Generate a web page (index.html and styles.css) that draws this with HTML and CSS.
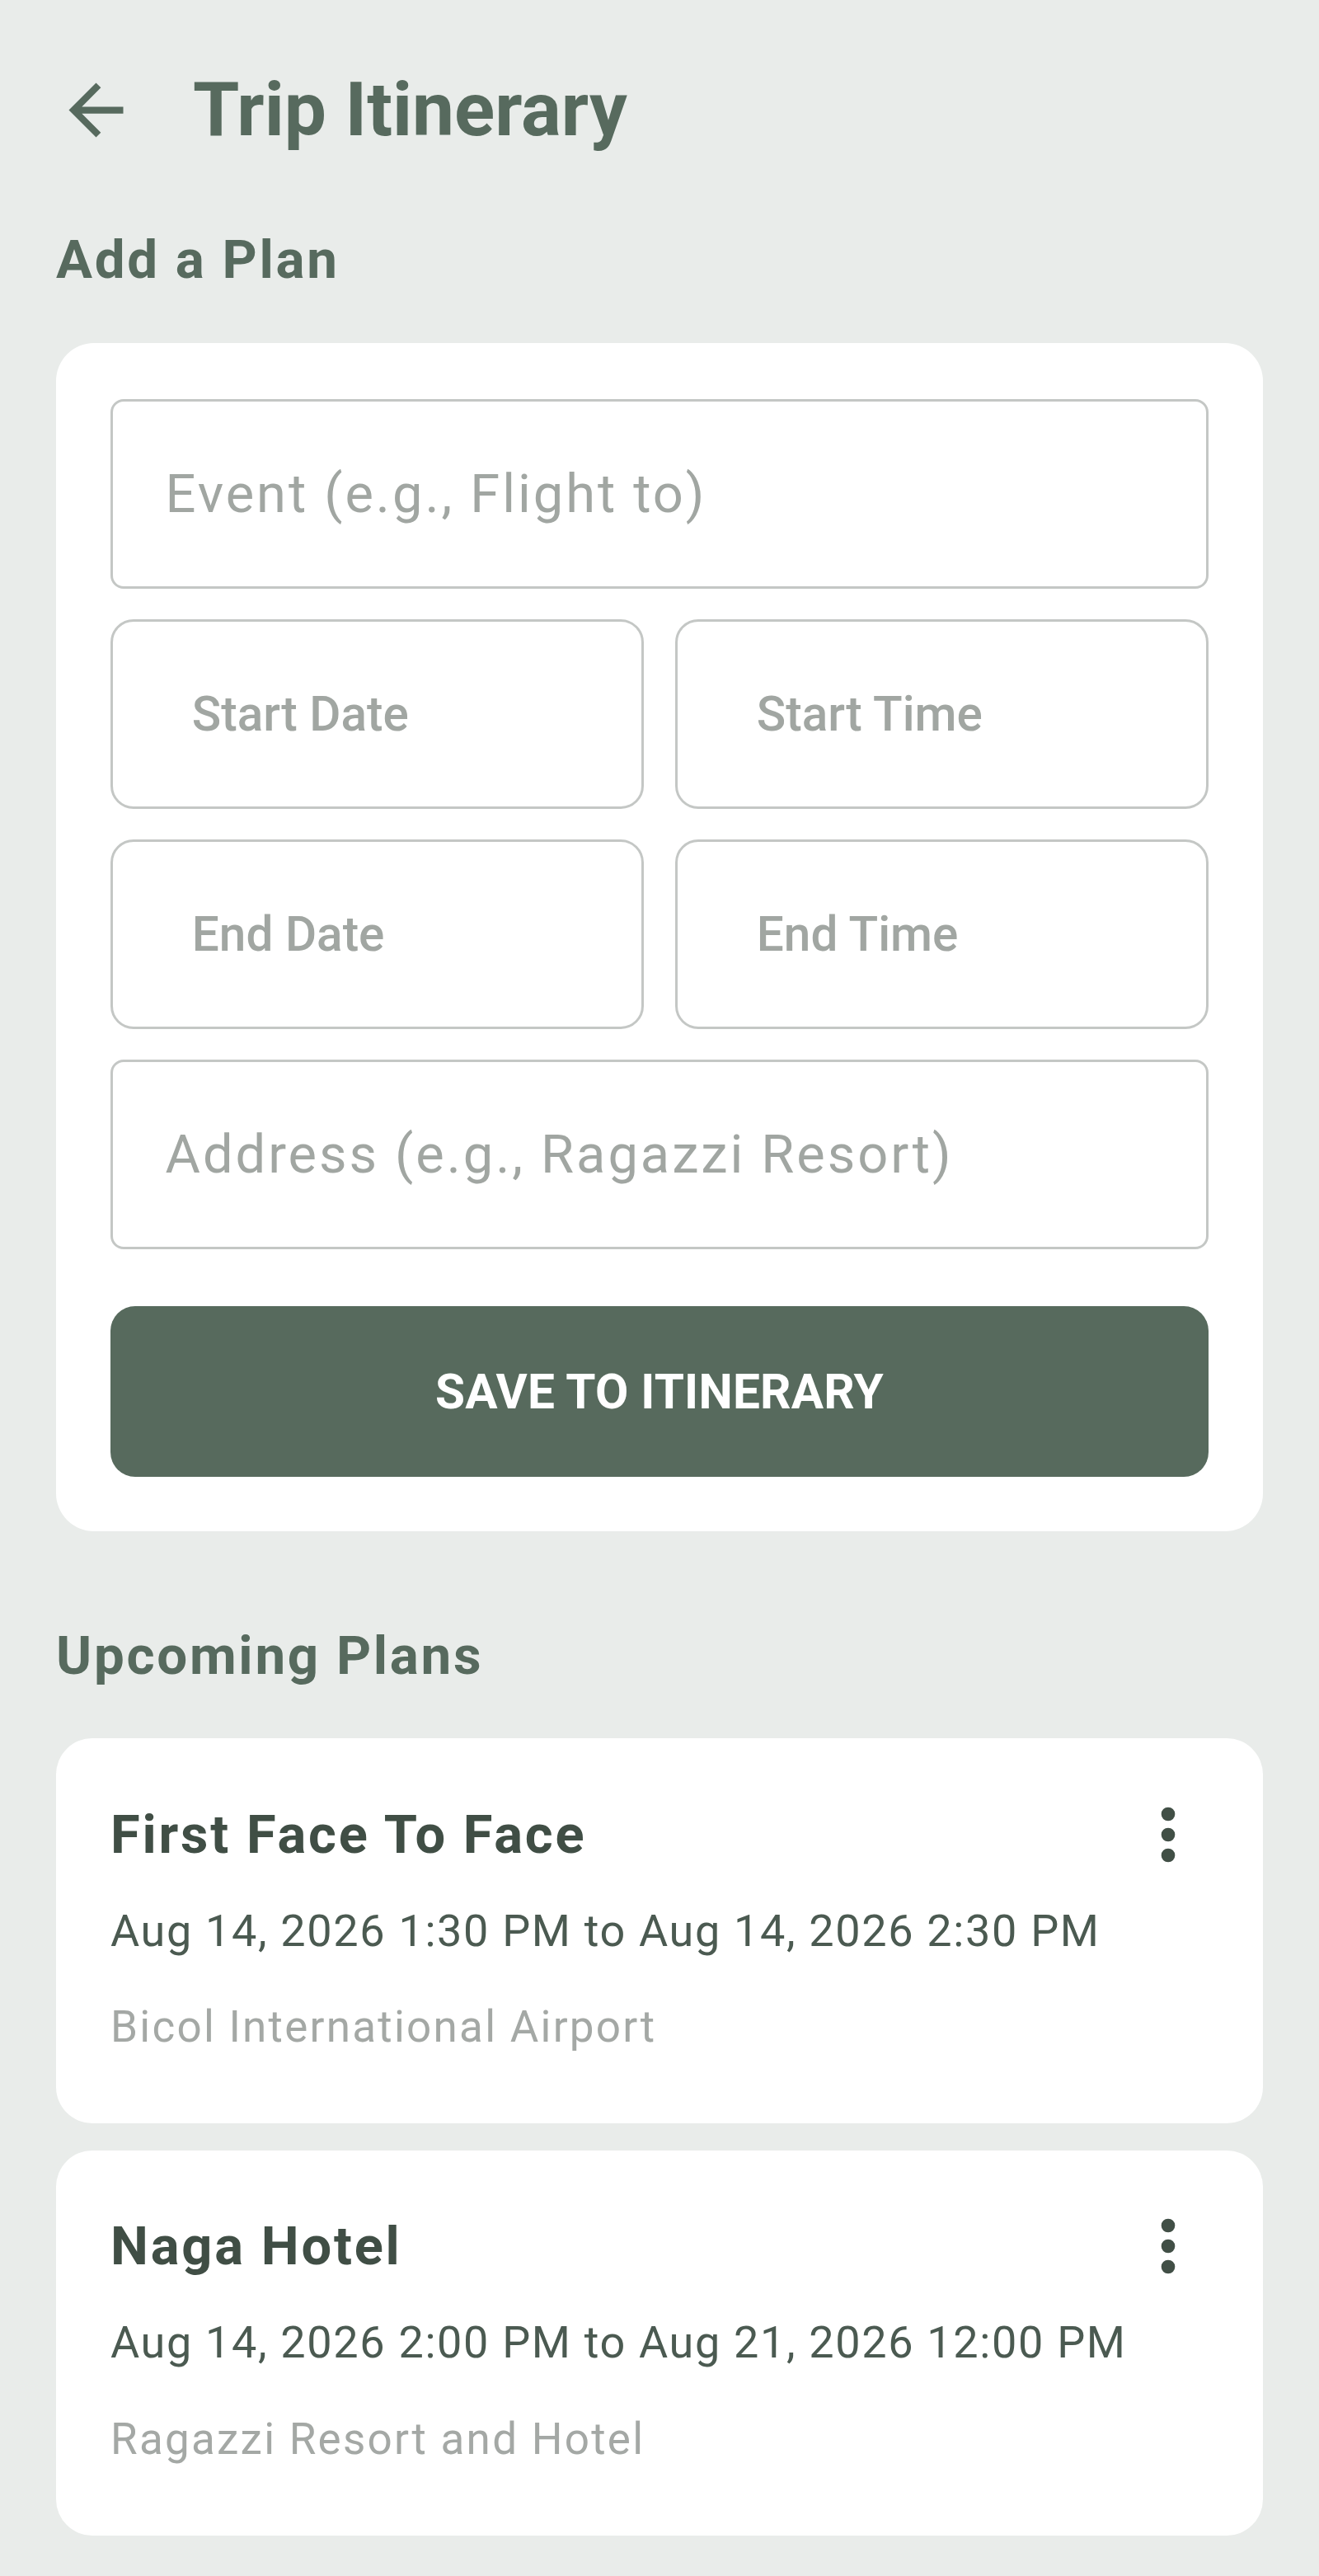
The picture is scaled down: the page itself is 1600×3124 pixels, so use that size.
FILE: index.html
```html
<!DOCTYPE html>
<html lang="en">
<head>
<meta charset="utf-8">
<title>Trip Itinerary</title>
<link rel="stylesheet" href="styles.css">
</head>
<body>
<div class="screen">
  <header class="topbar">
    <button class="back" aria-label="Back">
      <svg viewBox="0 0 24 24" class="back-icon"><path d="M20 11H7.83l5.59-5.59L12 4l-8 8 8 8 1.41-1.41L7.83 13H20v-2z"/></svg>
    </button>
    <h1 class="title">Trip Itinerary</h1>
  </header>

  <h2 class="section-title">Add a Plan</h2>
  <section class="form-card">
    <div class="field field-wide"><span>Event (e.g., Flight to)</span></div>
    <div class="field-row">
      <div class="field field-pick"><span>Start Date</span></div>
      <div class="field field-pick"><span>Start Time</span></div>
    </div>
    <div class="field-row">
      <div class="field field-pick"><span>End Date</span></div>
      <div class="field field-pick"><span>End Time</span></div>
    </div>
    <div class="field field-wide"><span>Address (e.g., Ragazzi Resort)</span></div>
    <button class="save">SAVE TO ITINERARY</button>
  </section>

  <h2 class="section-title upcoming">Upcoming Plans</h2>
  <div class="plans">
    <article class="plan-card">
      <div class="plan-head">
        <h3 class="plan-title">First Face To Face</h3>
        <svg viewBox="0 0 24 24" class="more-icon"><circle cx="12" cy="6" r="2"/><circle cx="12" cy="12" r="2"/><circle cx="12" cy="18" r="2"/></svg>
      </div>
      <p class="plan-when">Aug 14, 2026 1:30 PM to Aug 14, 2026 2:30 PM</p>
      <p class="plan-where">Bicol International Airport</p>
    </article>
    <article class="plan-card">
      <div class="plan-head">
        <h3 class="plan-title">Naga Hotel</h3>
        <svg viewBox="0 0 24 24" class="more-icon"><circle cx="12" cy="6" r="2"/><circle cx="12" cy="12" r="2"/><circle cx="12" cy="18" r="2"/></svg>
      </div>
      <p class="plan-when">Aug 14, 2026 2:00 PM to Aug 21, 2026 12:00 PM</p>
      <p class="plan-where">Ragazzi Resort and Hotel</p>
    </article>
  </div>
</div>
</body>
</html>
```
FILE: styles.css
```css
html {
  background: #e9ecea;
}
body {
  margin: 0;
  font-family: Roboto, "Noto Sans", "Liberation Sans", sans-serif;
  -webkit-font-smoothing: antialiased;
}
h1, h2, h3, p {
  margin: 0;
}
.screen {
  padding: 83.5px 68px 48px;
}

/* top bar */
.topbar {
  display: flex;
  align-items: center;
  height: 99px;
}
.back {
  flex: none;
  width: 99px;
  height: 99px;
  margin-left: -1.5px;
  padding: 0;
  border: 0;
  background: none;
  display: flex;
}
.back-icon {
  width: 99px;
  height: 99px;
  fill: #576a5e;
}
.title {
  margin-left: 68.5px;
  font-size: 91px;
  line-height: 99px;
  font-weight: 700;
  color: #576a5e;
}

/* section headings */
.section-title {
  margin: 92.4px 0 61.1px;
  font-size: 65.5px;
  line-height: 80px;
  font-weight: 700;
  letter-spacing: 2.7px;
  color: #576a5e;
}
.section-title.upcoming {
  margin: 111px 0 59.6px;
}

/* form card */
.form-card {
  background: #ffffff;
  border-radius: 46px;
  padding: 68px 66px 66px;
  display: flex;
  flex-direction: column;
  gap: 37px;
}
.field {
  box-sizing: border-box;
  height: 230px;
  border: 3.2px solid #c4c7c5;
  display: flex;
  align-items: center;
  color: #a1a6a2;
  white-space: nowrap;
}
.field-wide {
  border-radius: 16px;
  padding-left: 63.6px;
  font-size: 65px;
  line-height: 80px;
  letter-spacing: 2.95px;
  font-weight: 400;
}
.field-row {
  display: grid;
  grid-template-columns: 1fr 1fr;
  column-gap: 38px;
}
.field-pick {
  border-radius: 28px;
  padding-left: 95.8px;
  font-size: 58.5px;
  line-height: 72px;
  font-weight: 500;
}
.save {
  margin-top: 32.5px;
  height: 207px;
  border: 0;
  border-radius: 30px;
  background: #576a5d;
  color: #ffffff;
  font-family: Roboto, "Noto Sans", "Liberation Sans", sans-serif;
  font-size: 58.5px;
  font-weight: 700;
  letter-spacing: 0.2px;
}

/* plan cards */
.plans {
  display: flex;
  flex-direction: column;
  gap: 33px;
}
.plan-card {
  background: #ffffff;
  border-radius: 44px;
  padding: 66.5px 65px 82px 66px;
}
.plan-head {
  display: flex;
  align-items: center;
  justify-content: space-between;
  height: 100px;
}
.plan-title {
  font-size: 65px;
  line-height: 100px;
  font-weight: 700;
  letter-spacing: 2.8px;
  color: #404e45;
}
.more-icon {
  flex: none;
  width: 100px;
  height: 100px;
  fill: #414f46;
}
.plan-when {
  margin-top: 32px;
  font-size: 54px;
  line-height: 70px;
  letter-spacing: 1.65px;
  color: #4b5a51;
}
.plan-where {
  margin-top: 46.4px;
  font-size: 53px;
  line-height: 70px;
  letter-spacing: 2.25px;
  color: #a4a8a5;
}
```
